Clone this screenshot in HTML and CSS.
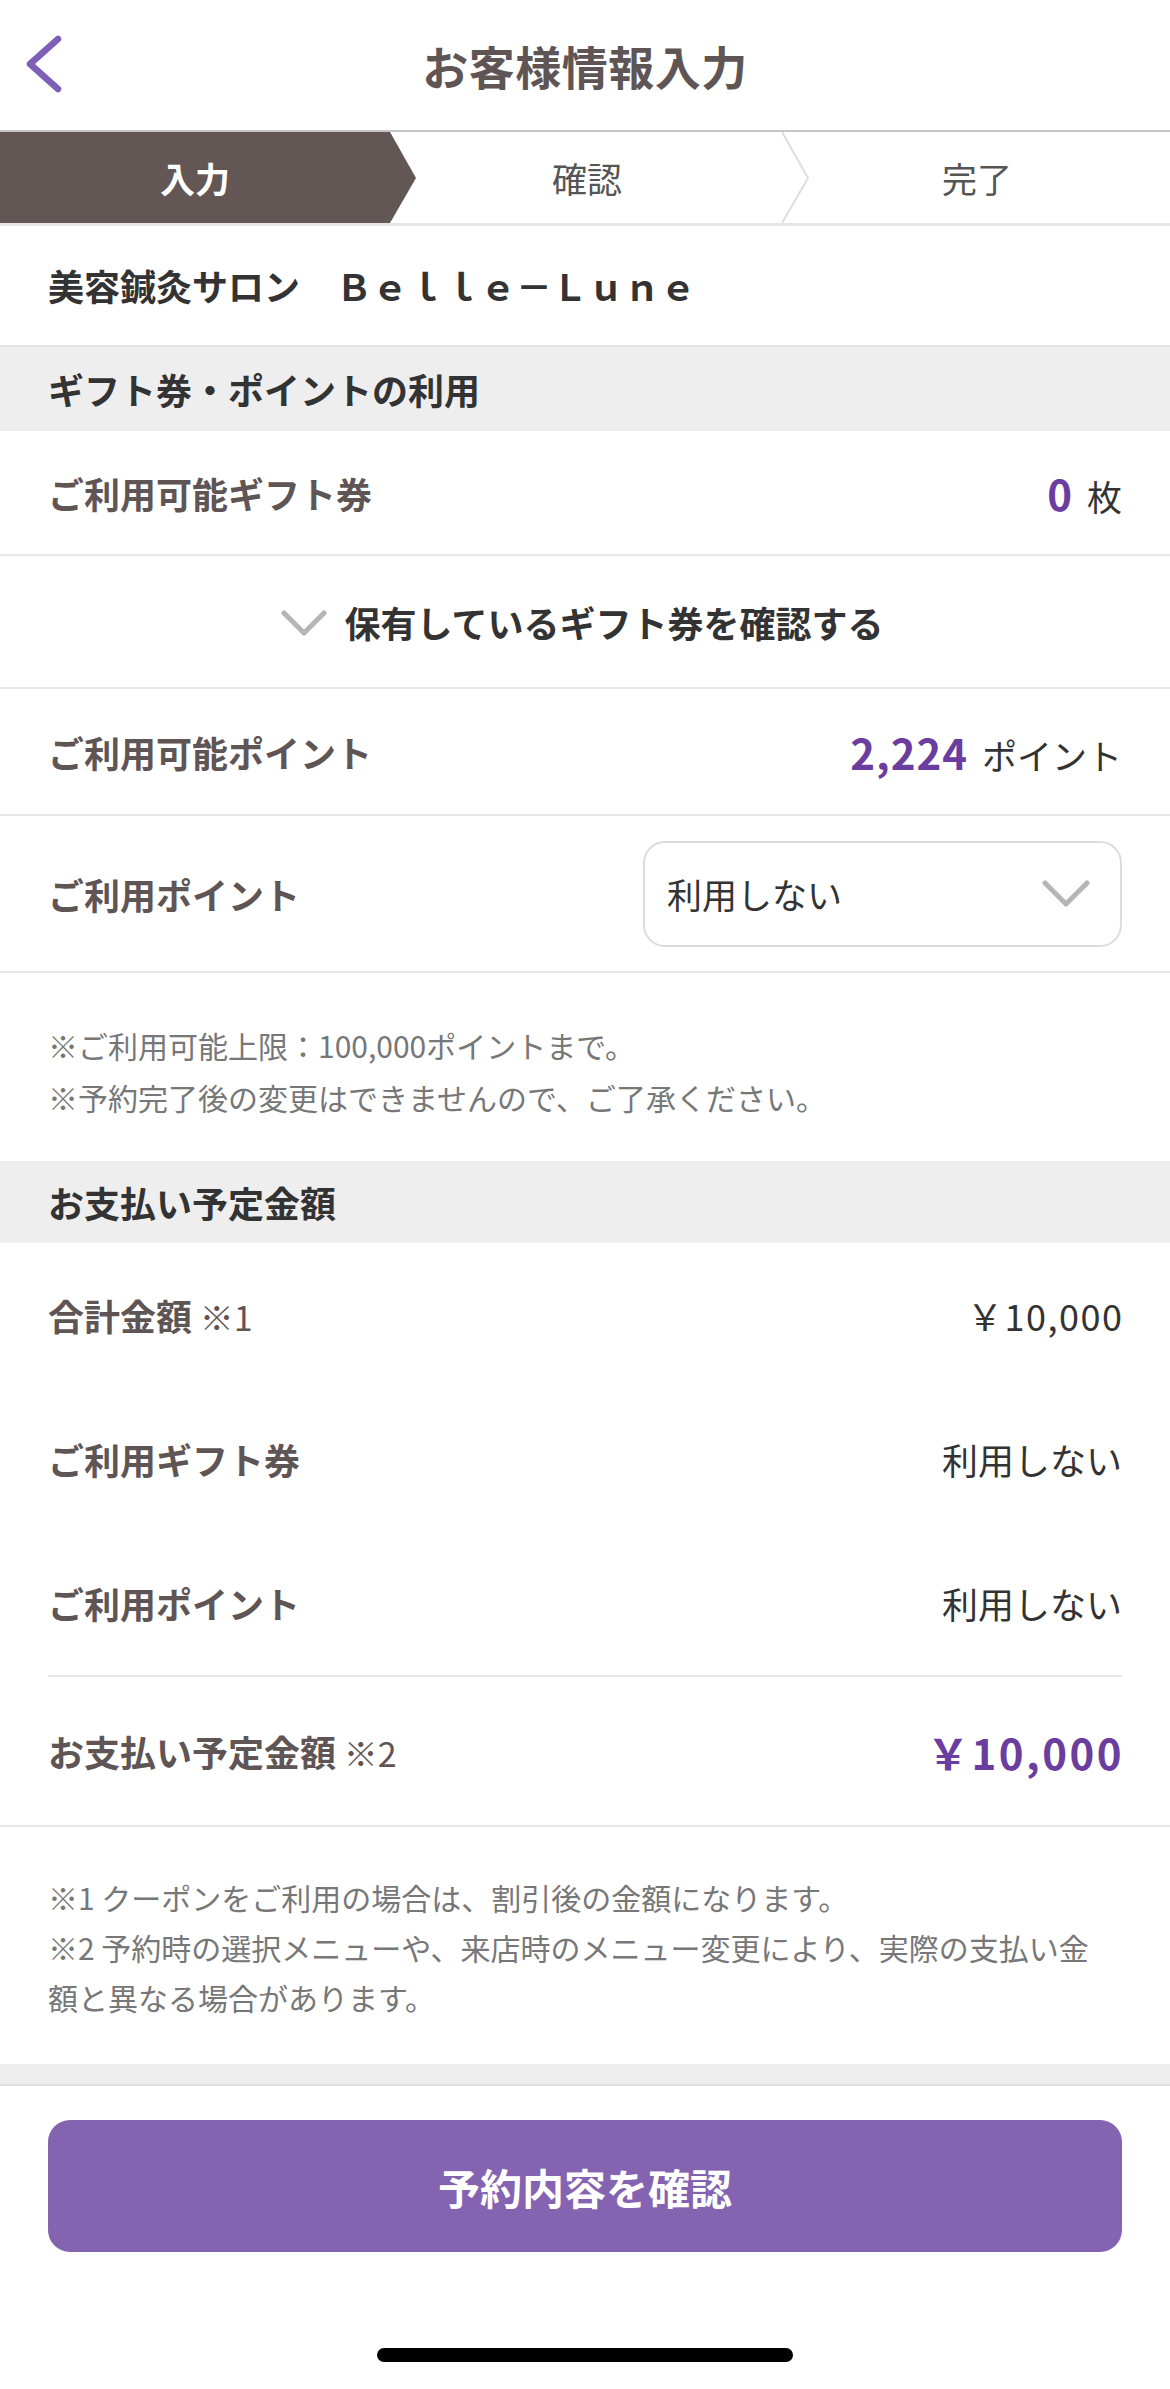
FILE: index.html
```html
<!DOCTYPE html>
<html lang="ja">
<head>
<meta charset="utf-8">
<title>お客様情報入力</title>
<link rel="stylesheet" href="styles.css">
</head>
<body>
<div class="page">
  <header class="header">
    <div class="back">
      <svg width="40" height="62" viewBox="0 0 40 62"><path d="M34 6 L6 31 L34 56" fill="none" stroke="#7e5fb8" stroke-width="6.5" stroke-linecap="round" stroke-linejoin="round"/></svg>
    </div>
    <h1 class="title">お客様情報入力</h1>
    <div></div>
  </header>

  <nav class="steps">
    <svg class="steps-bg" width="1170" height="91" viewBox="0 0 1170 91" preserveAspectRatio="none">
      <polygon points="0,0 390,0 416,46 390,91 0,91" fill="#635756"/>
      <polyline points="782,0 808,46 782,91" fill="none" stroke="#dedede" stroke-width="2"/>
    </svg>
    <div class="step active">入力</div>
    <div class="step">確認</div>
    <div class="step">完了</div>
  </nav>

  <div class="salon">美容鍼灸サロン　Ｂｅｌｌｅ－Ｌｕｎｅ</div>

  <div class="section-head">ギフト券・ポイントの利用</div>

  <div class="row row-gift">
    <span class="label">ご利用可能ギフト券</span>
    <span class="value"><span class="num">0</span><span class="unit">枚</span></span>
  </div>

  <div class="toggle">
    <svg width="46" height="26" viewBox="0 0 46 26"><path d="M3 3 L23 23 L43 3" fill="none" stroke="#b5b5b5" stroke-width="5" stroke-linecap="round" stroke-linejoin="round"/></svg>
    <span>保有しているギフト券を確認する</span>
  </div>

  <div class="row row-points">
    <span class="label">ご利用可能ポイント</span>
    <span class="value"><span class="num">2,224</span><span class="unit">ポイント</span></span>
  </div>

  <div class="row row-use">
    <span class="label">ご利用ポイント</span>
    <div class="select">
      <span>利用しない</span>
      <svg width="48" height="28" viewBox="0 0 48 28"><path d="M3 3 L24 24 L45 3" fill="none" stroke="#b5b5b5" stroke-width="5" stroke-linecap="round" stroke-linejoin="round"/></svg>
    </div>
  </div>

  <div class="notes notes-points">
    <p>※ご利用可能上限：100,000ポイントまで。</p>
    <p>※予約完了後の変更はできませんので、ご了承ください。</p>
  </div>

  <div class="section-head section-head-pay">お支払い予定金額</div>

  <div class="pay">
    <div class="pay-row">
      <span class="label">合計金額<span class="mark"> ※1</span></span>
      <span class="pay-val pay-amount">￥10,000</span>
    </div>
    <div class="pay-row">
      <span class="label">ご利用ギフト券</span>
      <span class="pay-val">利用しない</span>
    </div>
    <div class="pay-row">
      <span class="label">ご利用ポイント</span>
      <span class="pay-val">利用しない</span>
    </div>
    <div class="pay-row pay-total">
      <span class="label">お支払い予定金額<span class="mark"> ※2</span></span>
      <span class="total-val">￥10,000</span>
    </div>
  </div>

  <div class="notes notes-pay">
    <p>※1 クーポンをご利用の場合は、割引後の金額になります。</p>
    <p>※2 予約時の選択メニューや、来店時のメニュー変更により、実際の支払い金<br>額と異なる場合があります。</p>
  </div>

  <div class="band"></div>

  <footer class="footer">
    <button class="cta" type="button">予約内容を確認</button>
    <div class="home-bar"></div>
  </footer>
</div>
</body>
</html>
```

FILE: styles.css
```css
* { box-sizing: border-box; }

html, body {
  margin: 0;
  padding: 0;
  background: #ffffff;
}

body {
  font-family: "Noto Sans CJK JP", "Noto Sans", sans-serif;
  color: #333333;
}

.page {
  width: 1170px;
  min-height: 2389px;
  display: flex;
  flex-direction: column;
}

p { margin: 0; }

/* header */
.header {
  height: 132px;
  border-bottom: 2px solid #c6c6c6;
  display: grid;
  grid-template-columns: 1fr auto 1fr;
  align-items: center;
}

.back {
  padding-left: 24px;
  display: flex;
  align-items: center;
  padding-bottom: 2px;
}

.title {
  margin: 0;
  font-size: 46px;
  font-weight: 700;
  color: #5f5555;
  letter-spacing: 0.5px;
  line-height: 1;
}

/* steps */
.steps {
  position: relative;
  height: 94px;
  border-bottom: 3px solid #e6e6e6;
  display: grid;
  grid-template-columns: repeat(3, 390px);
  align-items: center;
}

.steps-bg {
  position: absolute;
  left: 0;
  top: 0;
}

.step {
  position: relative;
  text-align: center;
  font-size: 35px;
  color: #555555;
  line-height: 1;
}

.step:nth-child(3) { padding-left: 4px; }
.step:nth-child(4) { padding-left: 4px; }

.step.active {
  color: #ffffff;
  font-weight: 700;
}

/* salon name */
.salon {
  height: 119px;
  display: flex;
  align-items: center;
  padding-left: 48px;
  font-size: 36px;
  font-weight: 700;
  color: #333333;
  padding-bottom: 2px;
}

/* section header */
.section-head {
  background: #eeeeee;
  display: flex;
  align-items: center;
  padding-left: 48px;
  font-size: 36px;
  font-weight: 700;
  color: #333333;
  height: 86px;
  border-top: 2px solid #e2e2e2;
}

.section-head-pay {
  height: 82px;
  border-top: none;
}

/* rows */
.row {
  display: flex;
  align-items: center;
  justify-content: space-between;
  padding: 0 48px 0 48px;
  border-bottom: 2px solid #e8e8e8;
}

.row-gift { height: 125px; }
.row-points { height: 127px; }
.row-use { height: 157px; padding-right: 48px; }

.label {
  font-size: 36px;
  font-weight: 700;
  color: #5f5555;
  line-height: 1;
}

.mark {
  font-weight: 400;
  font-size: 34px;
}

.value {
  display: flex;
  align-items: baseline;
  gap: 14px;
}

.num {
  font-size: 42px;
  font-weight: 700;
  color: #6a3d9e;
  letter-spacing: 1px;
}

.unit {
  font-size: 35px;
  color: #333333;
}

.toggle {
  height: 133px;
  display: flex;
  align-items: center;
  justify-content: center;
  gap: 18px;
  border-bottom: 2px solid #e8e8e8;
  font-size: 36px;
  font-weight: 700;
  color: #333333;
  padding-right: 6px;
}

.toggle svg { margin-top: 2px; }

.select {
  width: 479px;
  height: 106px;
  border: 2.5px solid #dcdcdc;
  border-radius: 22px;
  display: flex;
  align-items: center;
  justify-content: space-between;
  padding: 0 30px 0 22px;
  font-size: 35px;
  color: #333333;
}

/* notes */
.notes {
  font-size: 30px;
  color: #777777;
}

.notes-points {
  padding: 46px 48px 38px;
  line-height: 52px;
}

.notes-pay {
  padding: 45px 48px 42px;
  line-height: 50px;
  border-top: 2px solid #e8e8e8;
}

/* payment */
.pay {
  display: flex;
  flex-direction: column;
  padding: 0 48px;
}

.pay-row {
  height: 144px;
  display: flex;
  align-items: center;
  justify-content: space-between;
}

.pay-total {
  height: 150px;
  border-top: 2px solid #e6e6e6;
}

.pay-val {
  font-size: 36px;
  color: #333333;
}

.pay-amount {
  letter-spacing: 1.5px;
  margin-right: -1.5px;
}

.total-val {
  font-size: 42px;
  font-weight: 700;
  color: #6a3d9e;
  letter-spacing: 2.5px;
  margin-right: -2px;
}

/* band */
.band {
  height: 22px;
  background: #eeeeee;
  border-bottom: 2px solid #dedede;
}

/* footer */
.footer {
  flex: 1;
  display: flex;
  flex-direction: column;
  align-items: center;
  padding: 34px 48px 0;
}

.cta {
  width: 100%;
  height: 132px;
  border: none;
  border-radius: 22px;
  background: #8463b0;
  color: #ffffff;
  font-family: "Noto Sans CJK JP", "Noto Sans", sans-serif;
  font-size: 42px;
  font-weight: 700;
  padding: 0;
}

.home-bar {
  margin-top: 96px;
  width: 416px;
  height: 14px;
  border-radius: 7px;
  background: #000000;
}
```
